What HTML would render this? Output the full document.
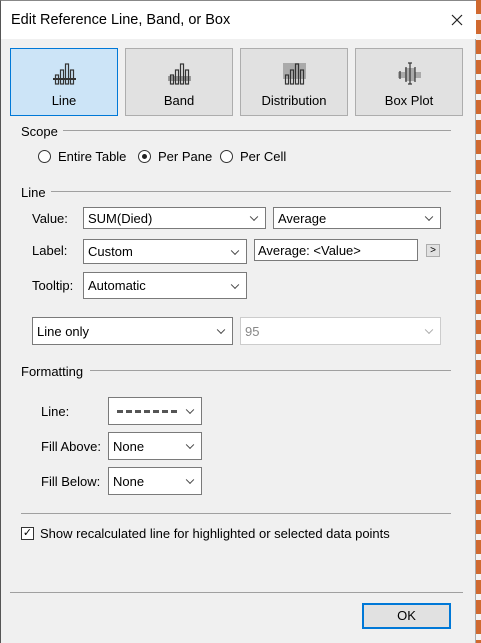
<!DOCTYPE html>
<html><head><style>
*{box-sizing:border-box;margin:0;padding:0}
body{width:481px;height:643px;overflow:hidden;background:#f0f0f0;font-family:"Liberation Sans",sans-serif;font-size:13px;color:#000;position:relative}
.a{position:absolute}
.strip{position:absolute;left:476px;top:0;width:5px;height:643px;background:repeating-linear-gradient(#d0692f 0 14px,#f3f3f3 14px 20px)}
.title{position:absolute;left:0;top:0;width:476px;height:39px;background:#fff;border-left:1px solid #555;border-top:1px solid #888}
.dlg{position:absolute;left:0;top:39px;width:476px;height:604px;border-left:1px solid #555;border-right:1px solid #aaa}
.btn{position:absolute;top:48px;width:108px;height:68px;background:#e1e1e1;border:1px solid #adadad;text-align:center}
.btn span{position:absolute;left:0;right:0;top:44px}
.btn svg{position:absolute;left:41px;top:12px}
.sel{background:#cce4f7;border-color:#0078d7}
.dd{position:absolute;background:#fff;border:1px solid #7a7a7a;padding-left:4px;display:flex;align-items:center}
.dd:after{content:"";position:absolute;right:8px;top:50%;width:5px;height:5px;border-right:1px solid #444;border-bottom:1px solid #444;transform:translateY(-70%) rotate(45deg)}
.tb:after{display:none}
.dis{border-color:#ccc;color:#888}
.dis:after{border-color:#aaa}
.hr{position:absolute;height:1px;background:#a0a0a0}
.rad{position:absolute;width:13px;height:13px;border:1px solid #333;border-radius:50%;background:#fff}
</style></head><body>
<div class="strip"></div>
<div class="title"><div class="a" style="left:10px;top:11px;font-size:14.5px">Edit Reference Line, Band, or Box</div>
<svg class="a" style="left:450px;top:13px" width="12" height="12"><path d="M1 1L11 11M11 1L1 11" stroke="#222" stroke-width="1.2"/></svg></div>
<div class="dlg"></div>

<div class="btn sel" style="left:10px"><svg width="26" height="26"><g fill="none" stroke="#333" stroke-width="1.2"><rect x="3.5" y="14" width="3" height="9"/><rect x="8.5" y="9" width="3" height="14"/><rect x="13.5" y="3" width="3" height="20"/><rect x="18.5" y="9" width="3" height="14"/><line x1="1" y1="18" x2="24" y2="18" stroke-width="2"/></g></svg><span>Line</span></div>
<div class="btn" style="left:125px"><svg width="26" height="26"><rect x="1" y="15" width="23" height="5" fill="#999"/><g fill="none" stroke="#333" stroke-width="1.2"><rect x="3.5" y="14" width="3" height="9"/><rect x="8.5" y="9" width="3" height="14"/><rect x="13.5" y="3" width="3" height="20"/><rect x="18.5" y="9" width="3" height="14"/></g></svg><span>Band</span></div>
<div class="btn" style="left:240px"><svg width="26" height="26"><rect x="1" y="2" width="23" height="16" fill="#aaa"/><g fill="none" stroke="#333" stroke-width="1.2"><rect x="3.5" y="14" width="3" height="9"/><rect x="8.5" y="9" width="3" height="14"/><rect x="13.5" y="3" width="3" height="20"/><rect x="18.5" y="9" width="3" height="14"/></g></svg><span>Distribution</span></div>
<div class="btn" style="left:355px"><svg width="26" height="26"><rect x="1" y="11" width="23" height="6" fill="#aaa"/><rect x="8" y="7" width="10" height="13" fill="#aaa"/><g stroke="#333" stroke-width="1.2"><line x1="3" y1="10" x2="3" y2="18"/><line x1="9" y1="6" x2="9" y2="21"/><line x1="13" y1="2" x2="13" y2="23"/><line x1="18" y1="6" x2="18" y2="21"/><line x1="11" y1="2" x2="15" y2="2"/><line x1="11" y1="23" x2="15" y2="23"/></g></svg><span>Box Plot</span></div>

<div class="a" style="left:21px;top:124px">Scope</div><div class="hr" style="left:63px;top:130px;width:388px"></div>
<div class="rad" style="left:38px;top:150px"></div><div class="a" style="left:58px;top:149px">Entire Table</div>
<div class="rad" style="left:138px;top:150px"><div class="a" style="left:3px;top:3px;width:5px;height:5px;border-radius:50%;background:#222"></div></div><div class="a" style="left:158px;top:149px">Per Pane</div>
<div class="rad" style="left:220px;top:150px"></div><div class="a" style="left:240px;top:149px">Per Cell</div>

<div class="a" style="left:21px;top:185px">Line</div><div class="hr" style="left:51px;top:191px;width:400px"></div>
<div class="a" style="left:32px;top:211px">Value:</div>
<div class="dd" style="left:83px;top:207px;width:183px;height:22px">SUM(Died)</div>
<div class="dd" style="left:273px;top:207px;width:168px;height:22px">Average</div>
<div class="a" style="left:32px;top:243px">Label:</div>
<div class="dd" style="left:83px;top:239px;width:164px;height:25px">Custom</div>
<div class="dd tb" style="left:254px;top:239px;width:164px;height:22px;padding-left:3px;">Average: &lt;Value&gt;</div>
<div class="a" style="left:426px;top:244px;width:14px;height:13px;background:#e1e1e1;border:1px solid #adadad;font-size:10px;text-align:center;line-height:11px">&gt;</div>
<div class="a" style="left:32px;top:278px">Tooltip:</div>
<div class="dd" style="left:83px;top:272px;width:164px;height:27px">Automatic</div>
<div class="dd" style="left:32px;top:317px;width:201px;height:28px">Line only</div>
<div class="dd dis" style="left:240px;top:317px;width:201px;height:28px">95</div>

<div class="a" style="left:21px;top:364px">Formatting</div><div class="hr" style="left:90px;top:370px;width:361px"></div>
<div class="a" style="left:41px;top:404px">Line:</div>
<div class="dd" style="left:108px;top:397px;width:94px;height:28px"><div style="width:60px;margin-left:4px;border-top:3px dashed #555"></div></div>
<div class="a" style="left:41px;top:439px">Fill Above:</div>
<div class="dd" style="left:108px;top:432px;width:94px;height:28px">None</div>
<div class="a" style="left:41px;top:474px">Fill Below:</div>
<div class="dd" style="left:108px;top:467px;width:94px;height:28px">None</div>
<div class="hr" style="left:21px;top:513px;width:430px"></div>
<div class="a" style="left:21px;top:527px;width:13px;height:13px;border:1px solid #333;background:#fff;font-size:11px;line-height:11px;text-align:center">✓</div>
<div class="a" style="left:40px;top:526px">Show recalculated line for highlighted or selected data points</div>
<div class="hr" style="left:10px;top:592px;width:453px"></div>
<div class="a" style="left:362px;top:603px;width:89px;height:26px;background:#e1e1e1;border:2px solid #0078d7;text-align:center;line-height:22px">OK</div>
</body></html>
